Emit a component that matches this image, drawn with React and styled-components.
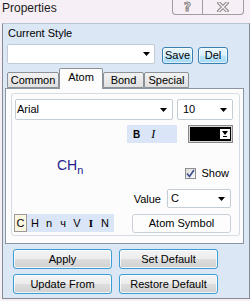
import React from "react";
import styled, { createGlobalStyle } from "styled-components";

const Global = createGlobalStyle`
  html, body { margin: 0; padding: 0; background: #f6eff5; }
  body { font-family: "Liberation Sans", Arial, sans-serif; font-size: 11px; color: #000; }
  * { box-sizing: border-box; }
`;

const Window = styled.div`
  width: 250px;
  height: 301px;
  background: #f6eff5;
  display: flex;
  flex-direction: column;
  overflow: hidden;
`;

const TitleBar = styled.div`
  height: 23px;
  display: flex;
  justify-content: space-between;
  align-items: flex-start;
  padding: 1px 6px 0 2px;
`;

const Title = styled.div`
  font-size: 12px;
  line-height: 15px;
  color: #1b1b1b;
`;

const CaptionGroup = styled.div`
  display: flex;
  margin-top: -1px;
`;

const CaptionButton = styled.div`
  width: ${(p) => p.$w}px;
  height: 15px;
  border: 1px solid #a29ca0;
  border-top: none;
  display: flex;
  align-items: center;
  justify-content: center;
  &:first-child { border-bottom-left-radius: 4px; border-right: none; }
  &:last-child { border-bottom-right-radius: 4px; }
`;

const HelpGlyph = styled.span`
  font-family: "DejaVu Sans", sans-serif;
  font-weight: bold;
  font-size: 12px;
  line-height: 12px;
  color: #f6eff5;
  -webkit-text-stroke: 1px #8a8587;
`;

const Panel = styled.div`
  margin-left: 2px;
  width: 248px;
  height: 276px;
  background: #dbe7f5;
  border: 1px solid #858b93;
  border-top-color: #b7c4d3;
  display: flex;
  flex-direction: column;
`;

const SectionLabel = styled.div`
  padding: 3px 0 0 5px;
  line-height: 13px;
`;

const StyleRow = styled.div`
  display: flex;
  align-items: flex-end;
  margin: 4px 0 0 4px;
  height: 20px;
`;

const Combo = styled.div`
  width: ${(p) => (p.$w ? `${p.$w}px` : "auto")};
  flex: ${(p) => (p.$w ? "none" : "1")};
  height: ${(p) => p.$h || 21}px;
  background: #fff;
  border: 1px solid ${(p) => p.$border || "#c4ccd5"};
  border-radius: 2px;
  display: flex;
  align-items: center;
  justify-content: space-between;
  padding: 0 ${(p) => p.$pr ?? 5}px 0 ${(p) => p.$pl ?? 2}px;
  line-height: 13px;
`;

const ComboText = styled.span`
  font-size: ${(p) => p.$size || 11}px;
`;

const Arrow = () => (
  <svg width="7" height="4" viewBox="0 0 7 4">
    <polygon points="0,0 7,0 3.5,4" fill="#000" />
  </svg>
);

const SmallButton = styled.div`
  width: ${(p) => p.$w}px;
  height: 17px;
  margin-left: ${(p) => p.$ml}px;
  border: 1px solid #3c7fb1;
  border-radius: 3px;
  background: linear-gradient(#eaf6fd 0%, #d9f0fc 50%, #bee6fd 50%, #a7d9f5 100%);
  box-shadow: inset 0 0 0 1px rgba(255, 255, 255, 0.6);
  display: flex;
  align-items: center;
  justify-content: center;
  font-size: 11px;
  line-height: 13px;
`;

const TabStrip = styled.div`
  display: flex;
  align-items: flex-end;
  margin: 4px 0 0 4px;
  height: 20px;
  position: relative;
  z-index: 1;
`;

const Tab = styled.div`
  width: ${(p) => p.$w}px;
  height: ${(p) => (p.$active ? 21 : 16)}px;
  margin-bottom: ${(p) => (p.$active ? -1 : 0)}px;
  border: 1px solid #8d9198;
  border-bottom: ${(p) => (p.$active ? "none" : "1px solid #8d9198")};
  border-radius: 2px 2px 0 0;
  background: ${(p) => (p.$active ? "#fcfcfc" : "linear-gradient(#f2f2f2, #e0e0e0)")};
  display: flex;
  justify-content: center;
  align-items: ${(p) => (p.$active ? "flex-start" : "center")};
  padding-top: ${(p) => (p.$active ? 2 : 0)}px;
  line-height: 13px;
`;

const TabPanel = styled.div`
  margin-left: 2px;
  width: 239px;
  height: 156px;
  margin-top: 0;
  border: 1px solid #8b96a2;
  background: #fcfcfc;
`;

const GroupBox = styled.div`
  margin: 4px 0 0 5px;
  width: 229px;
  height: 143px;
  border: 1px solid #d5dce3;
  border-radius: 3px;
  padding: 5px 6px 0 3px;
  display: flex;
  flex-direction: column;
`;

const FontRow = styled.div`
  display: flex;
  gap: 4px;
  height: 21px;
`;

const FormatRow = styled.div`
  display: flex;
  justify-content: flex-end;
  gap: 11px;
  height: 18px;
  margin-top: 5px;
`;

const StyleBar = styled.div`
  width: ${(p) => p.$w}px;
  height: ${(p) => p.$h || 18}px;
  background: #dae6f7;
  display: flex;
  align-items: center;
`;

const BoldGlyph = styled.span`
  font-weight: bold;
  font-size: 10px;
  margin-left: 6px;
`;

const ItalicGlyph = styled.span`
  font-family: "Liberation Serif", "Times New Roman", serif;
  font-style: italic;
  font-size: 12px;
  margin-left: 11px;
`;

const ColorBox = styled.div`
  width: 45px;
  height: 18px;
  background: #000;
  border: 1px solid #8a8a8a;
  box-shadow: inset 0 0 0 1px #d8d8d8;
  display: flex;
  justify-content: flex-end;
  align-items: center;
  padding-right: 2px;
`;

const ColorDrop = styled.div`
  width: 10px;
  height: 10px;
  background: #fff;
  display: flex;
  align-items: center;
  justify-content: center;
`;

const PreviewRow = styled.div`
  height: 45px;
  display: flex;
  justify-content: space-between;
  align-items: flex-start;
`;

const Formula = styled.div`
  margin: 14px 0 0 42px;
  font-size: 14px;
  line-height: 16px;
  color: #261c8c;
  white-space: nowrap;
`;

const Sub = styled.sub`
  font-size: 11px;
  vertical-align: -4px;
  line-height: 0;
`;

const ShowOption = styled.label`
  display: flex;
  align-items: center;
  gap: 5px;
  margin: 24px 4px 0 0;
  line-height: 13px;
`;

const CheckBox = styled.span`
  width: 11px;
  height: 11px;
  border: 1px solid #8e8f8f;
  background: linear-gradient(135deg, #dcdcdc, #fbfbfb);
  display: flex;
  align-items: center;
  justify-content: center;
`;

const ValueRow = styled.div`
  display: flex;
  justify-content: flex-end;
  align-items: center;
  gap: 6px;
  height: 19px;
  margin-top: 1px;
  padding-right: 2px;
`;

const BottomRow = styled.div`
  display: flex;
  justify-content: space-between;
  height: 19px;
  margin-top: 6px;
  padding-right: 2px;
`;

const Toolbar = styled.div`
  margin-left: -1px;
  width: 100px;
  height: 18px;
  background: #dae6f7;
  display: grid;
  grid-template-columns: repeat(7, 14px);
  align-items: center;
`;

const ToolItem = styled.div`
  height: 18px;
  display: flex;
  align-items: center;
  justify-content: center;
  font-size: 11px;
  line-height: 13px;
  font-family: ${(p) => (p.$serif ? `"Liberation Serif", serif` : "inherit")};
  font-weight: ${(p) => (p.$serif ? "bold" : "normal")};
  background: ${(p) => (p.$on ? "#fcf6e1" : "transparent")};
  border: ${(p) => (p.$on ? "1px solid #9a9a9a" : "none")};
  width: ${(p) => (p.$on ? 13 : 14)}px;
`;

const FlatButton = styled.div`
  width: 99px;
  height: 19px;
  background: #fdfdfd;
  border: 1px solid #c9d0d8;
  border-radius: 3px;
  display: flex;
  align-items: center;
  justify-content: center;
  line-height: 13px;
`;

const ButtonGrid = styled.div`
  display: grid;
  grid-template-columns: 99px 99px;
  grid-auto-rows: 20px;
  column-gap: 7px;
  row-gap: 5px;
  margin: 5px 0 0 10px;
`;

const ActionButton = styled.div`
  border: 1px solid #3a9dd4;
  border-radius: 3px;
  background: linear-gradient(#f4f4f4 0%, #ececec 50%, #dedede 50%, #d0d0d0 100%);
  box-shadow: inset 0 0 0 1px rgba(255, 255, 255, 0.75);
  display: flex;
  align-items: center;
  justify-content: center;
  font-size: 11px;
  line-height: 13px;
`;

export default function App() {
  return (
    <>
      <Global />
      <Window>
        <TitleBar>
          <Title>Properties</Title>
          <CaptionGroup>
            <CaptionButton $w={30}>
              <HelpGlyph>?</HelpGlyph>
            </CaptionButton>
            <CaptionButton $w={42}>
              <svg width="12" height="10" viewBox="0 0 12 10">
                <path d="M2 1 L10 9 M10 1 L2 9" stroke="#8a8587" strokeWidth="3.4" strokeLinecap="square" fill="none" />
                <path d="M2 1 L10 9 M10 1 L2 9" stroke="#f6eff5" strokeWidth="1.4" strokeLinecap="square" fill="none" />
              </svg>
            </CaptionButton>
          </CaptionGroup>
        </TitleBar>
        <Panel>
          <SectionLabel>Current Style</SectionLabel>
          <StyleRow>
            <Combo $w={148} $h={20} $pr={4} $border="#c2cad3">
              <span />
              <Arrow />
            </Combo>
            <SmallButton $w={31} $ml={7}>Save</SmallButton>
            <SmallButton $w={30} $ml={5}>Del</SmallButton>
          </StyleRow>
          <TabStrip>
            <Tab $w={52}>Common</Tab>
            <Tab $w={44} $active>Atom</Tab>
            <Tab $w={41}>Bond</Tab>
            <Tab $w={45}>Special</Tab>
          </TabStrip>
          <TabPanel>
            <GroupBox>
              <FontRow>
                <Combo $pl={1}>
                  <ComboText>Arial</ComboText>
                  <Arrow />
                </Combo>
                <Combo $w={56} $pl={5}>
                  <ComboText>10</ComboText>
                  <Arrow />
                </Combo>
              </FontRow>
              <FormatRow>
                <StyleBar $w={50}>
                  <BoldGlyph>B</BoldGlyph>
                  <ItalicGlyph>I</ItalicGlyph>
                </StyleBar>
                <ColorBox>
                  <ColorDrop>
                    <svg width="6" height="6" viewBox="0 0 6 6">
                      <polygon points="0,0 6,0 3,4" fill="#000" />
                      <rect x="1" y="5" width="4" height="1" fill="#000" />
                    </svg>
                  </ColorDrop>
                </ColorBox>
              </FormatRow>
              <PreviewRow>
                <Formula>
                  CH<Sub>n</Sub>
                </Formula>
                <ShowOption>
                  <CheckBox>
                    <svg width="9" height="9" viewBox="0 0 9 9">
                      <path d="M1 4.5 L3.5 7.5 L8 1" stroke="#3b4f8e" strokeWidth="1.6" fill="none" />
                    </svg>
                  </CheckBox>
                  Show
                </ShowOption>
              </PreviewRow>
              <ValueRow>
                <span>Value</span>
                <Combo $w={64} $h={19} $pl={3}>
                  <ComboText>C</ComboText>
                  <Arrow />
                </Combo>
              </ValueRow>
              <BottomRow>
                <Toolbar>
                  <ToolItem $on>C</ToolItem>
                  <ToolItem>H</ToolItem>
                  <ToolItem>n</ToolItem>
                  <ToolItem>ч</ToolItem>
                  <ToolItem>V</ToolItem>
                  <ToolItem $serif>I</ToolItem>
                  <ToolItem>N</ToolItem>
                </Toolbar>
                <FlatButton>Atom Symbol</FlatButton>
              </BottomRow>
            </GroupBox>
          </TabPanel>
          <ButtonGrid>
            <ActionButton>Apply</ActionButton>
            <ActionButton>Set Default</ActionButton>
            <ActionButton>Update From</ActionButton>
            <ActionButton>Restore Default</ActionButton>
          </ButtonGrid>
        </Panel>
      </Window>
    </>
  );
}
